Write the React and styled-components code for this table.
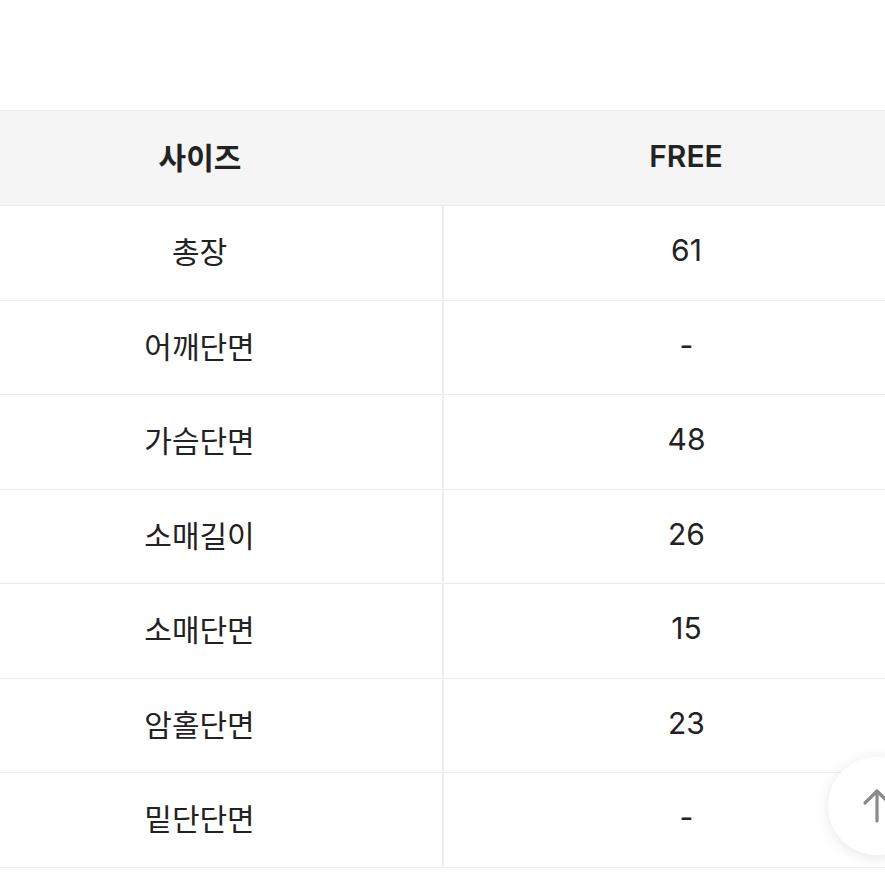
import styled, { createGlobalStyle } from 'styled-components';

const rows = [
   ['총장', '61'],
   ['어깨단면', '-'],
   ['가슴단면', '48'],
   ['소매길이', '26'],
   ['소매단면', '15'],
   ['암홀단면', '23'],
   ['밑단단면', '-'],
];

const GlobalStyle = createGlobalStyle`
   html, body {
      margin: 0;
      padding: 0;
      background: #fff;
      overflow: hidden;
   }
   body {
      font-family: "Inter", "Noto Sans CJK KR", sans-serif;
      color: #222;
   }
`;

const App = () => (
   <>
      <GlobalStyle />
      <Page>
         <SizeTable>
            <thead>
               <tr>
                  <HeadCell>사이즈</HeadCell>
                  <HeadCell>FREE</HeadCell>
               </tr>
            </thead>
            <tbody>
               {rows.map(([label, value]) => (
                  <tr key={label}>
                     <Cell $divider>{label}</Cell>
                     <Cell>{value}</Cell>
                  </tr>
               ))}
            </tbody>
         </SizeTable>
      </Page>
      <TopButton aria-label="맨 위로">
         <svg width="40" height="40" viewBox="0 0 40 40" fill="none" stroke="#8a8a8a" strokeWidth="3.2" strokeLinecap="round" strokeLinejoin="round">
            <path d="M20 35V5" />
            <path d="M8 17L20 5l12 12" />
         </svg>
      </TopButton>
   </>
);

// Styled Components
const Page = styled.div`
   padding-top: 110px;
   width: 885px;
   overflow: hidden;
`;

const SizeTable = styled.table`
   margin-left: -43px;
   width: 972px;
   border-collapse: collapse;
   table-layout: fixed;
   border-top: 1px solid #ececec;
`;

const HeadCell = styled.th`
   height: 90px;
   padding: 0 0 4px;
   background: #f5f5f5;
   border-bottom: 1px solid #ebebeb;
   font-size: 30px;
   font-weight: 600;
   color: #222;
   text-align: center;
`;

const Cell = styled.td`
   height: 88px;
   padding: 0 0 5.5px;
   border-bottom: 1.5px solid #ebebeb;
   border-right: ${({ $divider }) => ($divider ? '2px solid #eeeeee' : 'none')};
   font-size: 30px;
   font-weight: 400;
   color: #222;
   text-align: center;
`;

const TopButton = styled.button`
   position: fixed;
   left: 828px;
   top: 757px;
   width: 98px;
   height: 98px;
   border: none;
   border-radius: 50%;
   background: #fff;
   box-shadow: 0 2px 14px rgba(0, 0, 0, 0.1);
   display: flex;
   align-items: center;
   justify-content: center;
   padding: 0;
   cursor: pointer;
`;

export default App;
